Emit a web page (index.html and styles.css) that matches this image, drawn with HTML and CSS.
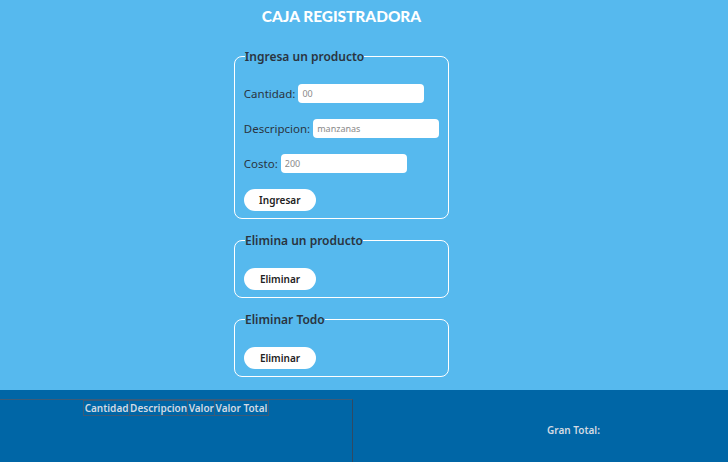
FILE: index.html
```html
<!DOCTYPE html>
<html lang="es">
<head>
<meta charset="utf-8">
<title>Caja Registradora</title>
<link rel="stylesheet" href="styles.css">
</head>
<body>
<main class="top">
  <h1 class="title">CAJA REGISTRADORA</h1>
  <fieldset class="box box-add">
    <legend>Ingresa un producto</legend>
    <div class="row"><label>Cantidad:</label><input class="field" type="text" placeholder="00"></div>
    <div class="row"><label>Descripcion:</label><input class="field" type="text" placeholder="manzanas"></div>
    <div class="row"><label>Costo:</label><input class="field" type="text" placeholder="200"></div>
    <button class="btn">Ingresar</button>
  </fieldset>
  <fieldset class="box box-small">
    <legend>Elimina un producto</legend>
    <button class="btn">Eliminar</button>
  </fieldset>
  <fieldset class="box box-small">
    <legend>Eliminar Todo</legend>
    <button class="btn">Eliminar</button>
  </fieldset>
</main>
<section class="bottom">
  <div class="list">
    <table class="tbl">
      <thead>
        <tr><th>Cantidad</th><th>Descripcion</th><th>Valor</th><th>Valor Total</th></tr>
      </thead>
    </table>
  </div>
  <div class="total">Gran Total:</div>
</section>
</body>
</html>
```
FILE: styles.css
```css
html, body {
  margin: 0;
  padding: 0;
  height: 100%;
}
body {
  background: #56b9ee;
  font-family: "Noto Sans", "DejaVu Sans", sans-serif;
  font-size: 11.5px;
  color: #2a3440;
  display: flex;
  flex-direction: column;
  overflow: hidden;
}
.top {
  display: flex;
  flex-direction: column;
  align-items: center;
  height: 390px;
  padding-right: 45px;
}
.title {
  margin: 6px 0 0 0;
  color: #ffffff;
  font-family: "Lato", sans-serif;
  font-weight: 900;
  font-size: 15.4px;
  letter-spacing: 0;
  line-height: 20px;
}
.box {
  width: 215px;
  box-sizing: border-box;
  border: 1px solid #ffffff;
  border-radius: 8px;
  margin: 0;
  padding: 0 9px;
}
.box legend {
  font-weight: 600;
  font-size: 12px;
  padding: 0;
  margin-left: 1px;
  color: #2a3440;
}
.box-add {
  margin-top: 22px;
  padding-top: 19px;
  padding-bottom: 7px;
}
.box-small {
  margin-top: 13px;
  padding-top: 19px;
  padding-bottom: 7px;
}
.row {
  display: flex;
  align-items: center;
  height: 19px;
  margin-bottom: 16px;
}
.row label {
  margin-right: 3px;
}
.field {
  width: 126px;
  height: 19px;
  box-sizing: border-box;
  border: none;
  border-radius: 4px;
  background: #ffffff;
  padding: 0 4px;
  font-family: "Noto Sans", sans-serif;
  font-size: 9px;
}
.field::placeholder {
  color: #8a8a8a;
}
.btn {
  width: 72px;
  height: 22px;
  border: none;
  border-radius: 11px;
  background: #ffffff;
  font-family: "Noto Sans", sans-serif;
  font-weight: 600;
  font-size: 10px;
  color: #222;
  padding: 0;
}
.bottom {
  flex: 1;
  background: #0066a6;
  display: flex;
}
.list {
  width: 352px;
  margin-top: 9px;
  border-top: 1px solid #3d5b78;
  border-right: 1px solid #2f4a63;
  display: flex;
  justify-content: center;
  align-items: flex-start;
}
.tbl {
  border-collapse: collapse;
  color: #d3dae3;
  font-size: 10px;
}
.tbl th {
  border: 1px solid #3d5b78;
  padding: 0 0.3px;
  font-weight: 600;
  line-height: 14px;
}
.total {
  flex: 1;
  padding-top: 33px;
  padding-left: 194px;
  color: #d3dae3;
  font-weight: 600;
  font-size: 10px;
}
```
